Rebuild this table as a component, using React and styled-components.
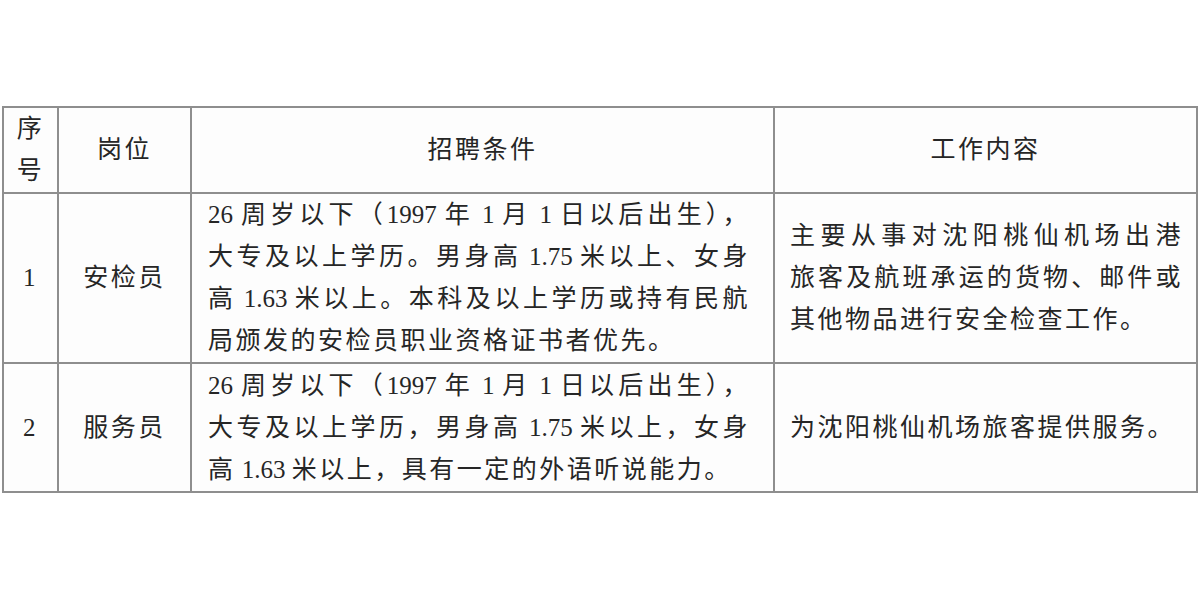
import React from "react";
import styled, { createGlobalStyle } from "styled-components";

const GlobalStyle = createGlobalStyle`
  html, body {
    margin: 0;
    padding: 0;
    background: #ffffff;
  }
  body {
    font-family: "Liberation Serif", "Noto Sans CJK SC", serif;
    color: #262626;
  }
`;

const Page = styled.div`
  width: 1200px;
  height: 600px;
  padding-top: 106px;
  padding-left: 2px;
  box-sizing: border-box;
`;

// grid lines are the background showing through the gaps
const Table = styled.div`
  display: inline-grid;
  grid-template-columns: 53px 131px 581px 421px;
  grid-template-rows: 84px 168px 127px;
  gap: 2px;
  padding: 2px;
  background: #8e8e8e;
`;

const Cell = styled.div`
  background: #fdfdfd;
  display: flex;
  flex-direction: column;
  justify-content: center;
  align-items: ${(p) => (p.$left ? "stretch" : "center")};
  padding: ${(p) => p.$pad || "0"};
  font-size: 25px;
  line-height: 42px;
  letter-spacing: 2.5px;
  text-align: center;
  box-sizing: border-box;
`;

const Line = styled.div`
  text-align: left;
  white-space: nowrap;
  ${(p) => p.$justify && "text-align-last: justify; white-space: normal;"}
`;

// digits and latin spaces are set tight, like the original's Times runs
const Num = styled.span`
  letter-spacing: 0;
`;

const rich = (t) =>
  t.split(/([0-9. ]+)/).map((part, i) =>
    /^[0-9. ]+$/.test(part) ? <Num key={i}>{part}</Num> : part
  );

const rows = [
  {
    no: "1",
    post: "安检员",
    req: [
      "26 周岁以下（1997 年 1 月 1 日以后出生），",
      "大专及以上学历。男身高 1.75 米以上、女身",
      "高 1.63 米以上。本科及以上学历或持有民航",
      "局颁发的安检员职业资格证书者优先。",
    ],
    work: [
      "主要从事对沈阳桃仙机场出港",
      "旅客及航班承运的货物、邮件或",
      "其他物品进行安全检查工作。",
    ],
  },
  {
    no: "2",
    post: "服务员",
    req: [
      "26 周岁以下（1997 年 1 月 1 日以后出生），",
      "大专及以上学历，男身高 1.75 米以上，女身",
      "高 1.63 米以上，具有一定的外语听说能力。",
    ],
    work: ["为沈阳桃仙机场旅客提供服务。"],
  },
];

export default function App() {
  return (
    <Page>
      <GlobalStyle />
      <Table>
        <Cell>
          <div>序</div>
          <div>号</div>
        </Cell>
        <Cell>岗位</Cell>
        <Cell>招聘条件</Cell>
        <Cell>工作内容</Cell>

        {rows.map((r) => (
          <React.Fragment key={r.no}>
            <Cell>{r.no}</Cell>
            <Cell>{r.post}</Cell>
            <Cell $left $pad="0 23px 0 16px">
              {r.req.map((t, i) => (
                <Line key={i} $justify={i < r.req.length - 1}>
                  {rich(t)}
                </Line>
              ))}
            </Cell>
            <Cell $left $pad="0 13px 0 15px">
              {r.work.map((t, i) => (
                <Line key={i} $justify={r.work.length > 1 && i < r.work.length - 1}>
                  {t}
                </Line>
              ))}
            </Cell>
          </React.Fragment>
        ))}
      </Table>
    </Page>
  );
}
